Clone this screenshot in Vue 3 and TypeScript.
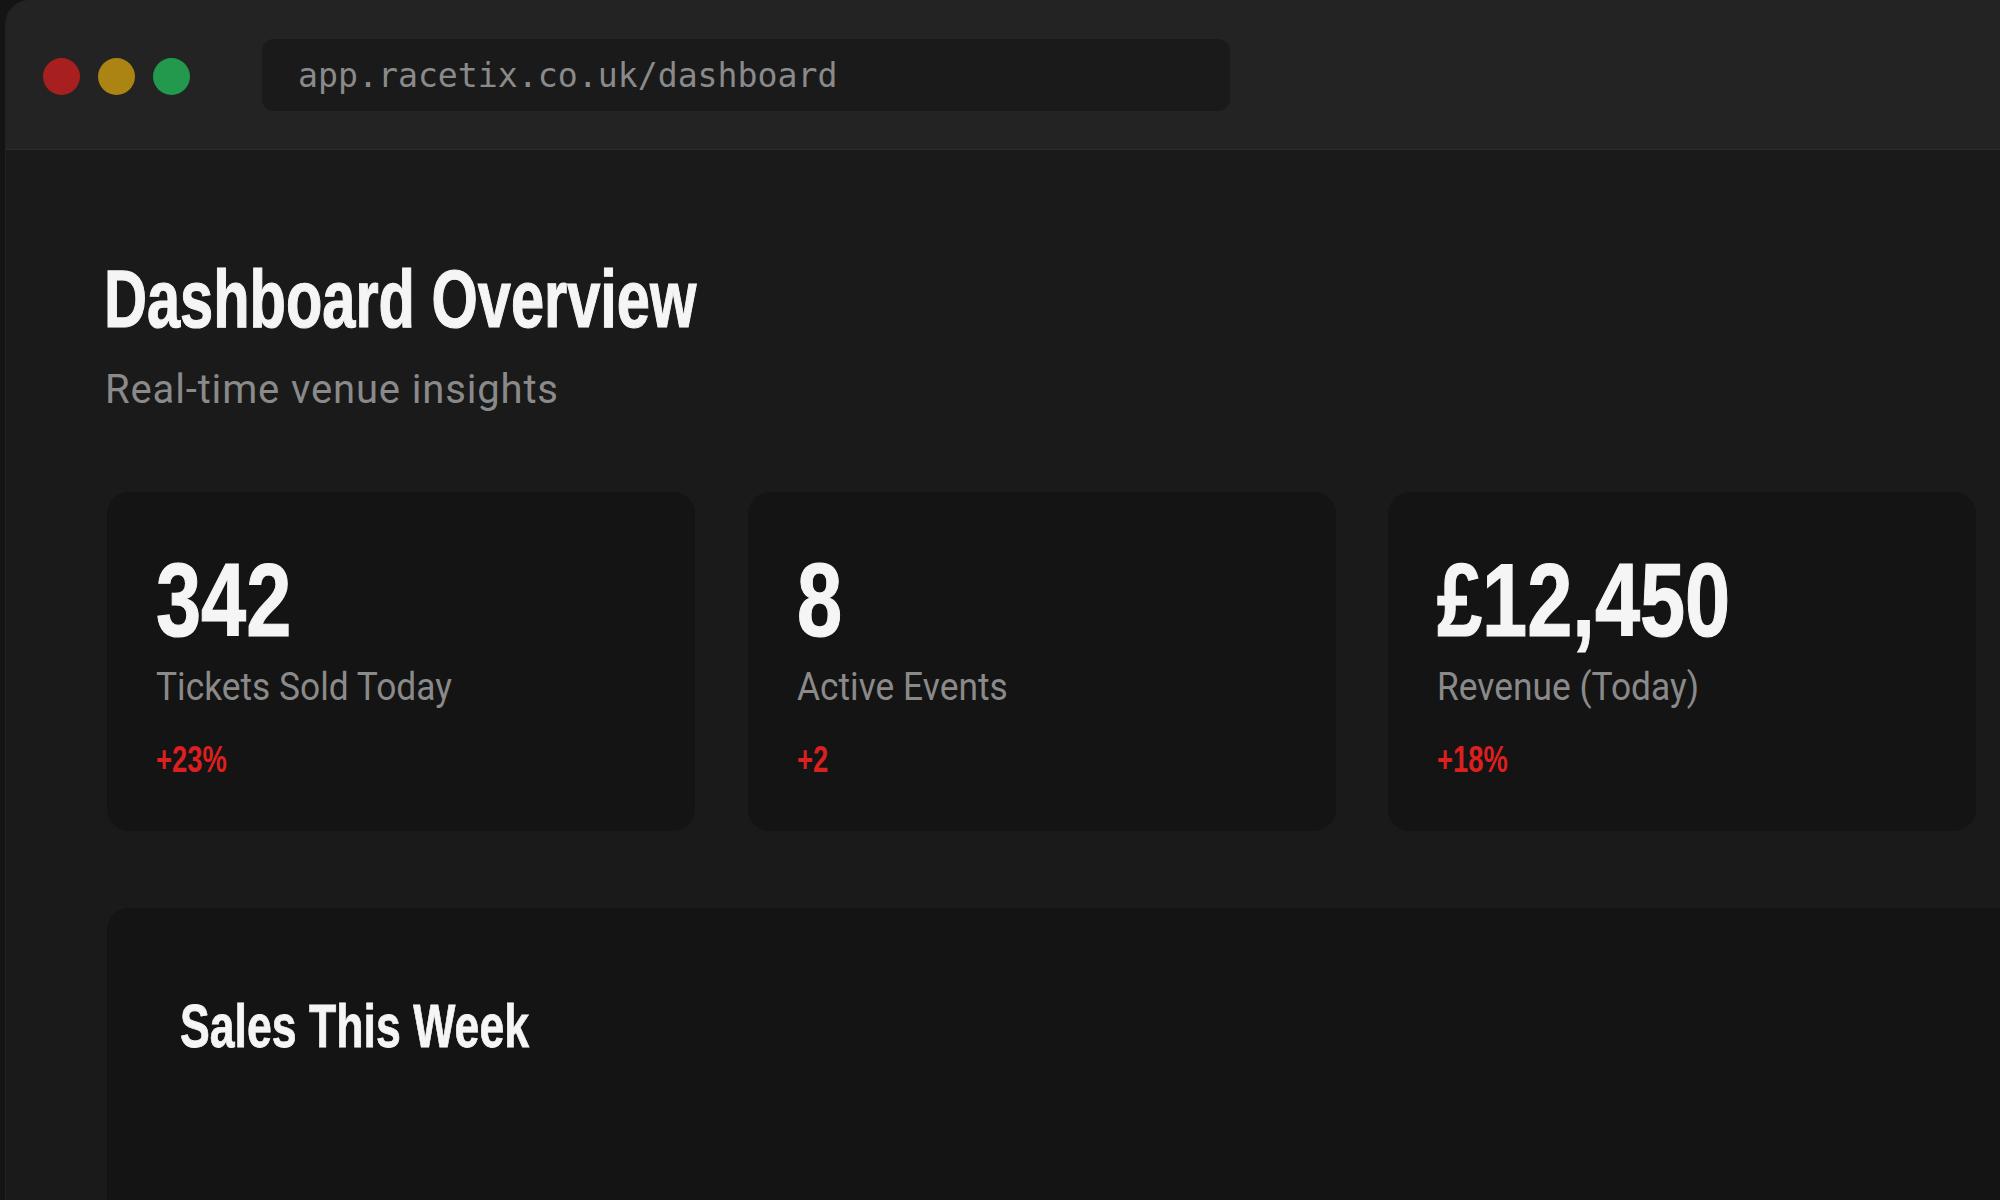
<script setup lang="ts">
interface Stat {
  value: string
  label: string
  change: string
}

const stats: Stat[] = [
  { value: '342', label: 'Tickets Sold Today', change: '+23%' },
  { value: '8', label: 'Active Events', change: '+2' },
  { value: '£12,450', label: 'Revenue (Today)', change: '+18%' }
]
</script>

<template>
  <div class="page">
    <div class="window">
      <header class="titlebar">
        <div class="dots">
          <span class="dot dot--red"></span>
          <span class="dot dot--yellow"></span>
          <span class="dot dot--green"></span>
        </div>
        <div class="url">app.racetix.co.uk/dashboard</div>
      </header>

      <main class="content">
        <h1 class="title">Dashboard Overview</h1>
        <p class="subtitle">Real-time venue insights</p>

        <section class="stats">
          <div v-for="stat in stats" :key="stat.label" class="card">
            <div class="card__value">{{ stat.value }}</div>
            <div class="card__label">{{ stat.label }}</div>
            <div class="card__change">{{ stat.change }}</div>
          </div>
        </section>

        <section class="panel">
          <h2 class="panel__title">Sales This Week</h2>
        </section>
      </main>
    </div>
  </div>
</template>

<style>
html,
body {
  margin: 0;
  background: #141414;
  overflow: hidden;
}
</style>

<style scoped>
.page {
  width: 2000px;
  height: 1200px;
  overflow: hidden;
  padding-left: 5px;
  box-sizing: border-box;
}

.window {
  width: 2040px;
  height: 1200px;
  background: #1a1a1a;
  border-top-left-radius: 24px;
  border-left: 1px solid #222;
  box-sizing: border-box;
  overflow: hidden;
}

.titlebar {
  height: 150px;
  box-sizing: border-box;
  background: #232323;
  border-bottom: 1px solid #2a2a2a;
  display: flex;
  align-items: flex-start;
  padding: 39px 0 0 37px;
}

.dots {
  display: flex;
  gap: 18px;
  padding-top: 19px;
}

.dot {
  width: 37px;
  height: 37px;
  border-radius: 50%;
}

.dot--red {
  background: #a81f1f;
}

.dot--yellow {
  background: #ac8414;
}

.dot--green {
  background: #22994d;
}

.url {
  width: 968px;
  height: 72px;
  margin-left: 72px;
  padding-left: 36px;
  box-sizing: border-box;
  background: #1a1a1a;
  border-radius: 12px;
  color: #8a8a8a;
  font-family: 'DejaVu Sans Mono', monospace;
  font-size: 33.2px;
  line-height: 74px;
}

.content {
  padding: 104px 0 0 101px;
}

/* no condensed family is installed, so the display text is narrowed by hand */
.title {
  margin: 0 0 0 -3px;
  color: #f5f5f5;
  font-family: 'Liberation Sans', sans-serif;
  font-size: 81px;
  font-weight: 700;
  line-height: 90px;
  white-space: nowrap;
  transform: scaleX(0.735);
  transform-origin: left;
  -webkit-text-stroke: 1.2px #f5f5f5;
}

.subtitle {
  margin: 22px 0 0 -2px;
  color: #8a8a8a;
  font-family: Roboto, sans-serif;
  font-size: 40px;
  letter-spacing: 0.85px;
  line-height: 48px;
}

.stats {
  display: grid;
  grid-template-columns: repeat(3, 588px);
  gap: 52.5px;
  margin-top: 78px;
}

.card {
  height: 339px;
  box-sizing: border-box;
  padding: 63px 49px 0;
  background: #141414;
  border-radius: 22px;
}

.card__value {
  color: #f5f5f5;
  font-family: 'Liberation Sans', sans-serif;
  font-size: 104px;
  font-weight: 700;
  line-height: 90px;
  white-space: nowrap;
  transform: scaleX(0.78);
  transform-origin: left;
  -webkit-text-stroke: 1.2px #f5f5f5;
}

.card__label {
  margin-top: 20px;
  color: #8a8a8a;
  font-family: Roboto, sans-serif;
  font-size: 38px;
  line-height: 44px;
  white-space: nowrap;
  transform: scaleX(0.93);
  transform-origin: left;
}

.card__change {
  margin-top: 31px;
  color: #dc1f1f;
  font-family: 'Liberation Sans', sans-serif;
  font-size: 36px;
  font-weight: 700;
  line-height: 40px;
  white-space: nowrap;
  transform: scaleX(0.76);
  transform-origin: left;
}

.panel {
  width: 2000px;
  height: 400px;
  margin-top: 77px;
  padding: 83px 0 0 73px;
  box-sizing: border-box;
  background: #141414;
  border-radius: 22px;
}

.panel__title {
  margin: 0;
  color: #f5f5f5;
  font-family: 'Liberation Sans', sans-serif;
  font-size: 62px;
  font-weight: 700;
  line-height: 70px;
  white-space: nowrap;
  transform: scaleX(0.72);
  transform-origin: left;
  -webkit-text-stroke: 0.8px #f5f5f5;
}
</style>
